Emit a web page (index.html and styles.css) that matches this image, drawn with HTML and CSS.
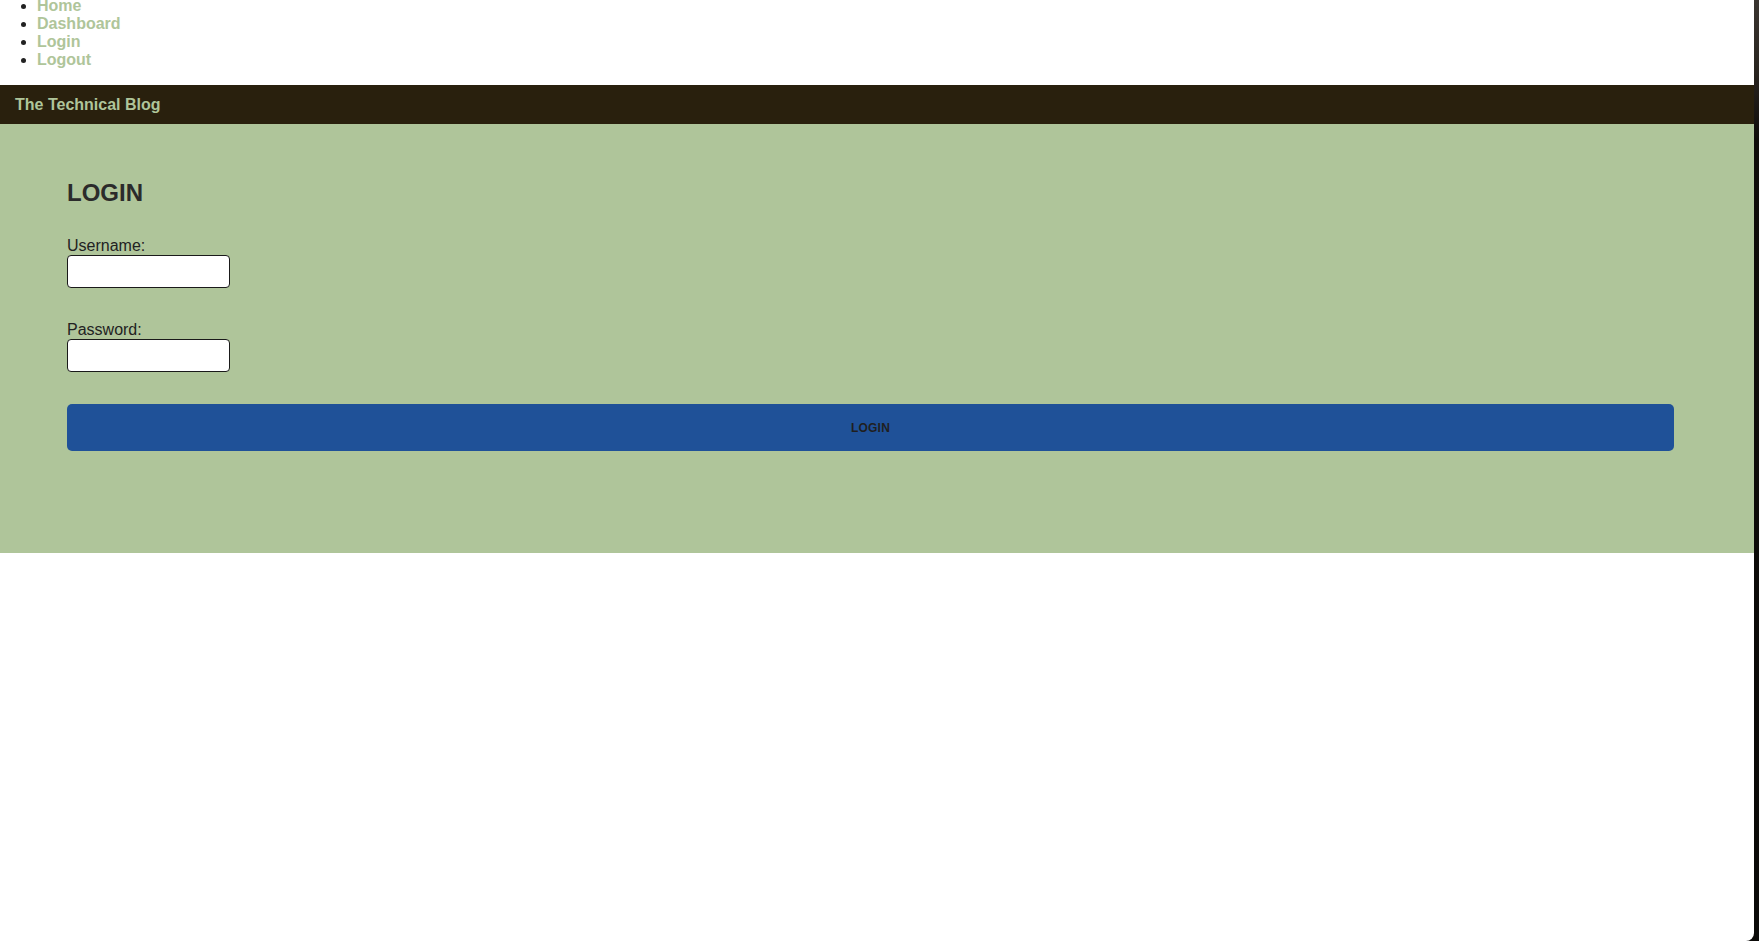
FILE: index.html
```html
<!DOCTYPE html>
<html lang="en">
<head>
<meta charset="utf-8">
<title>The Technical Blog - Login</title>
<link rel="stylesheet" href="styles.css">
</head>
<body>
<div class="window">
  <nav class="top-nav">
    <ul class="nav-list">
      <li><a href="#">Home</a></li>
      <li><a href="#">Dashboard</a></li>
      <li><a href="#">Login</a></li>
      <li><a href="#">Logout</a></li>
    </ul>
  </nav>
  <header class="site-header">
    <span class="site-title">The Technical Blog</span>
  </header>
  <main class="login-section">
    <h2 class="login-title">LOGIN</h2>
    <form class="login-form">
      <div class="field">
        <label class="field-label" for="username">Username:</label>
        <input class="field-input" id="username" type="text">
      </div>
      <div class="field">
        <label class="field-label" for="password">Password:</label>
        <input class="field-input" id="password" type="password">
      </div>
      <button class="login-button" type="button">LOGIN</button>
    </form>
  </main>
</div>
<div class="desktop-edge"></div>
</body>
</html>
```
FILE: styles.css
```css
html, body {
  margin: 0;
  padding: 0;
  height: 100%;
}
body {
  display: flex;
  background: #0b0a08;
  font-family: "Liberation Sans", Arial, Helvetica, sans-serif;
  overflow: hidden;
}
.window {
  width: 1754px;
  flex: 0 0 1754px;
  height: 100%;
  background: #ffffff;
  border-bottom-right-radius: 8px;
  display: flex;
  flex-direction: column;
}
.desktop-edge {
  flex: 1;
  background: linear-gradient(#3a3530 0, #2a2520 70px, #0e0c0a 140px, #0b0a08 100%);
}
.top-nav {
  height: 85px;
  overflow: hidden;
}
.nav-list {
  margin: -3px 0 0 0;
  padding-left: 37px;
  font-size: 16px;
  line-height: 18px;
  font-weight: bold;
  color: #222;
}
.nav-list a {
  color: #afc59a;
  text-decoration: none;
}
.site-header {
  height: 39px;
  background: #29200d;
  display: flex;
  align-items: center;
  padding-left: 15px;
}
.site-title {
  color: #afc59a;
  font-weight: bold;
  font-size: 16px;
  line-height: 18px;
}
.login-section {
  background: #afc59a;
  padding: 55px 80px 102px 67px;
}
.login-title {
  margin: 0 0 30px 0;
  font-size: 24px;
  line-height: 28px;
  font-weight: bold;
  color: #2b2b2b;
}
.login-form {
  display: flex;
  flex-direction: column;
}
.field {
  display: flex;
  flex-direction: column;
  align-items: flex-start;
  gap: 0;
  margin-bottom: 33px;
}
.field:last-of-type {
  margin-bottom: 32px;
}
.field-label {
  font-size: 16px;
  line-height: 18px;
  color: #222;
}
.field-input {
  box-sizing: border-box;
  width: 163px;
  height: 33px;
  margin: 0;
  border: 1px solid #1a1a1a;
  border-radius: 4px;
  background: #fff;
  padding: 2px 6px;
}
.login-button {
  height: 47px;
  margin: 0;
  border: none;
  border-radius: 5px;
  background: #1f5198;
  color: #1f1f1f;
  font-family: "Liberation Sans", Arial, Helvetica, sans-serif;
  font-weight: bold;
  font-size: 12px;
  letter-spacing: 0.2px;
}
```
